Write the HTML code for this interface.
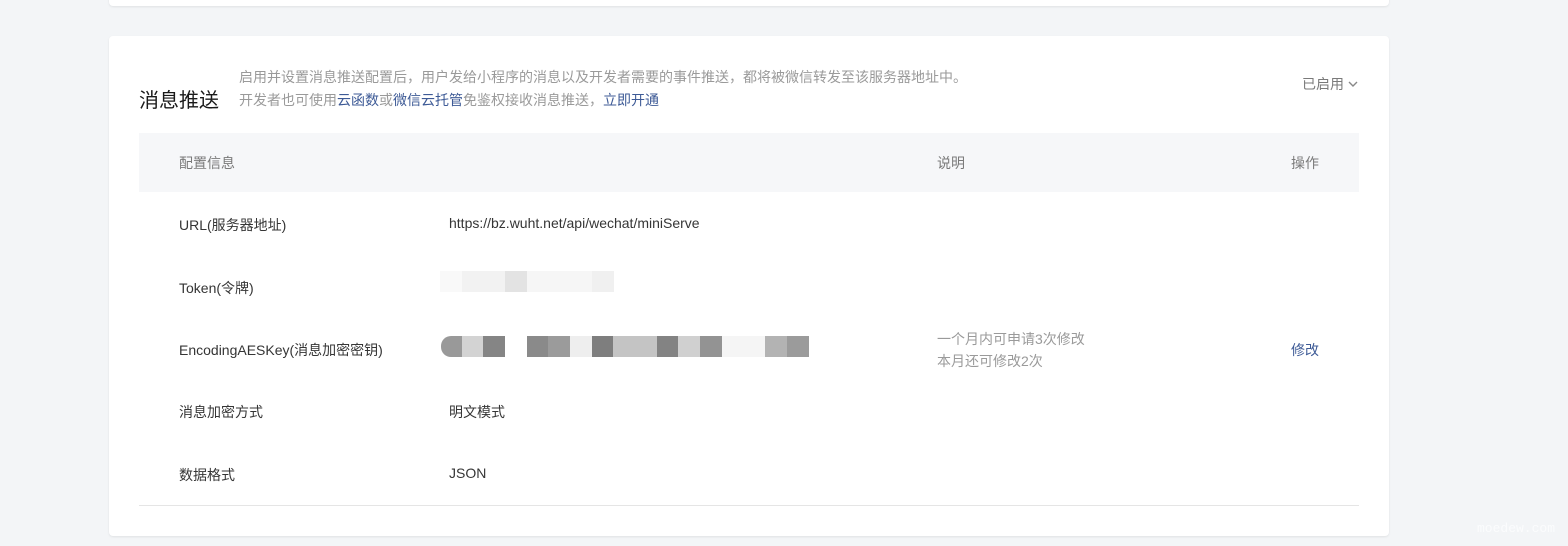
<!DOCTYPE html>
<html><head><meta charset="utf-8"><style>
body{margin:0;width:1568px;height:546px;background:#f3f5f7;font-family:"Liberation Sans","Noto Sans CJK SC",sans-serif;position:relative;overflow:hidden}
.card{position:absolute;background:#fff;border-radius:4px;box-shadow:0 1px 2px rgba(0,0,0,.08)}
.a{position:absolute;white-space:nowrap}
.t{font-size:14px;color:#353535}
.g{font-size:14px;color:#9a9a9a}
.h{font-size:14px;color:#7a7a7a}
.l{color:#3d5a96}
.b{position:absolute;height:21px}
</style></head><body>
<div class="card" style="left:109px;top:-10px;width:1280px;height:16px"></div>
<div class="card" style="left:109px;top:36px;width:1280px;height:500px"></div>
<div class="a" style="left:139px;top:84px;font-size:20px;color:#1a1a1a">消息推送</div>
<div class="a g" style="left:239px;top:67px">启用并设置消息推送配置后，用户发给小程序的消息以及开发者需要的事件推送，都将被微信转发至该服务器地址中。</div>
<div class="a g" style="left:239px;top:90px">开发者也可使用<span class="l">云函数</span>或<span class="l">微信云托管</span>免鉴权接收消息推送，<span class="l">立即开通</span></div>
<div class="a h" style="left:1302px;top:74px">已启用<svg width="12" height="10" style="margin-left:3px" viewBox="0 0 12 10"><path d="M2 3l4 4 4-4" stroke="#888" stroke-width="1.4" fill="none"/></svg></div>
<div class="a" style="left:139px;top:133px;width:1220px;height:59px;background:#f6f7f9"></div>
<div class="a h" style="left:179px;top:153px">配置信息</div>
<div class="a h" style="left:937px;top:153px">说明</div>
<div class="a h" style="left:1291px;top:153px">操作</div>
<div class="a t" style="left:179px;top:215px">URL(服务器地址)</div>
<div class="a t" style="left:449px;top:215px">https://bz.wuht.net/api/wechat/miniServe</div>
<div class="a t" style="left:179px;top:278px">Token(令牌)</div>
<div class="a t" style="left:179px;top:340px">EncodingAESKey(消息加密密钥)</div>
<div class="a t" style="left:179px;top:402px">消息加密方式</div>
<div class="a t" style="left:449px;top:402px">明文模式</div>
<div class="a t" style="left:179px;top:465px">数据格式</div>
<div class="a t" style="left:449px;top:465px">JSON</div>
<div class="a g" style="left:937px;top:329px">一个月内可申请3次修改</div>
<div class="a g" style="left:937px;top:351px">本月还可修改2次</div>
<div class="a" style="left:1291px;top:340px;font-size:14px;color:#3d5a96">修改</div>
<div class="a" style="left:139px;top:505px;width:1220px;height:1px;background:#e5e5e5"></div>
<div class="b" style="left:440px;top:271px;width:22px;background:#f9f9f9"></div>
<div class="b" style="left:462px;top:271px;width:43px;background:#f2f2f2"></div>
<div class="b" style="left:505px;top:271px;width:22px;background:#e3e3e3"></div>
<div class="b" style="left:527px;top:271px;width:65px;background:#f6f6f6"></div>
<div class="b" style="left:592px;top:271px;width:22px;background:#f0f0f0"></div>
<div class="b" style="left:441px;top:336px;width:21px;background:#999;border-radius:10px 0 0 10px"></div>
<div class="b" style="left:462px;top:336px;width:21px;background:#d3d3d3"></div>
<div class="b" style="left:483px;top:336px;width:22px;background:#858585"></div>
<div class="b" style="left:527px;top:336px;width:21px;background:#8a8a8a"></div>
<div class="b" style="left:548px;top:336px;width:22px;background:#9b9b9b"></div>
<div class="b" style="left:570px;top:336px;width:22px;background:#eee"></div>
<div class="b" style="left:592px;top:336px;width:21px;background:#7e7e7e"></div>
<div class="b" style="left:613px;top:336px;width:44px;background:#c4c4c4"></div>
<div class="b" style="left:657px;top:336px;width:21px;background:#838383"></div>
<div class="b" style="left:678px;top:336px;width:22px;background:#d0d0d0"></div>
<div class="b" style="left:700px;top:336px;width:22px;background:#939393"></div>
<div class="b" style="left:722px;top:336px;width:43px;background:#f5f5f5"></div>
<div class="b" style="left:765px;top:336px;width:22px;background:#b3b3b3"></div>
<div class="b" style="left:787px;top:336px;width:22px;background:#9b9b9b"></div>
<div class="a" style="left:1477px;top:521px;font-family:'Liberation Mono',monospace;font-size:13px;color:#fbfcfd">moedew.com</div>
</body></html>
